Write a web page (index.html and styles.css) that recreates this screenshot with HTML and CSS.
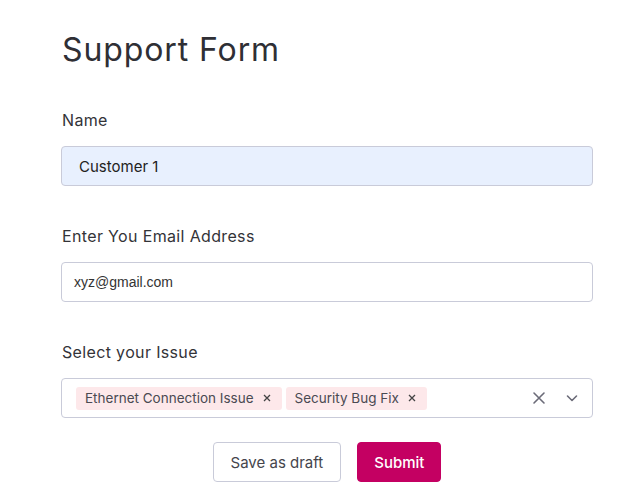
FILE: index.html
```html
<!DOCTYPE html>
<html lang="en">
<head>
<meta charset="utf-8">
<title>Support Form</title>
<link rel="stylesheet" href="styles.css">
</head>
<body>
<form class="form">
  <h1 class="title">Support Form</h1>
  <div class="field">
    <label class="label">Name</label>
    <div class="input input-filled">Customer 1</div>
  </div>
  <div class="field">
    <label class="label">Enter You Email Address</label>
    <div class="input input-email">xyz@gmail.com</div>
  </div>
  <div class="field field-last">
    <label class="label">Select your Issue</label>
    <div class="select">
      <div class="chips">
        <span class="chip">Ethernet Connection Issue<svg class="chip-x" width="8" height="8" viewBox="0 0 8 8"><path d="M1 1 L7 7 M7 1 L1 7" stroke="#444" stroke-width="1.3" fill="none"/></svg></span>
        <span class="chip">Security Bug Fix<svg class="chip-x" width="8" height="8" viewBox="0 0 8 8"><path d="M1 1 L7 7 M7 1 L1 7" stroke="#444" stroke-width="1.3" fill="none"/></svg></span>
      </div>
      <div class="select-icons">
        <svg class="icon" width="14" height="14" viewBox="0 0 14 14"><path d="M2 2 L12 12 M12 2 L2 12" stroke="#6b6b78" stroke-width="1.6" fill="none" stroke-linecap="round"/></svg>
        <svg class="icon chev" width="14" height="14" viewBox="0 0 14 14"><path d="M2.5 5 L7 9.5 L11.5 5" stroke="#6b6b78" stroke-width="1.6" fill="none" stroke-linecap="round" stroke-linejoin="round"/></svg>
      </div>
    </div>
  </div>
  <div class="actions">
    <button type="button" class="btn btn-draft">Save as draft</button>
    <button type="button" class="btn btn-submit">Submit</button>
  </div>
</form>
</body>
</html>
```
FILE: styles.css
```css
html, body {
  margin: 0;
  padding: 0;
  background: #ffffff;
}
.form {
  width: 532px;
  margin-left: 61px;
  padding-top: 30px;
  font-family: "Inter", "Open Sans", sans-serif;
}
.title {
  margin: 0 0 38px 1px;
  font-size: 32px;
  line-height: 40px;
  font-weight: 400;
  color: #2f2f35;
  letter-spacing: 0.9px;
}
.field {
  display: flex;
  flex-direction: column;
  margin-bottom: 38px;
}
.field-last {
  margin-bottom: 24px;
}
.label {
  font-size: 16px;
  line-height: 24px;
  color: #333338;
  letter-spacing: 0.35px;
  margin: 0 0 14px 1px;
}
.input {
  box-sizing: border-box;
  height: 40px;
  border: 1px solid #c9cbd9;
  border-radius: 4px;
  display: flex;
  align-items: center;
}
.input-filled {
  background: #e8f0fe;
  padding-left: 17px;
  font-size: 15px;
  color: #222;
}
.input-email {
  padding-left: 12px;
  font-family: "Liberation Sans", Arial, sans-serif;
  font-size: 14px;
  color: #333;
}
.select {
  box-sizing: border-box;
  height: 40px;
  border: 1px solid #c9cbd9;
  border-radius: 4px;
  display: flex;
  align-items: center;
  justify-content: space-between;
  padding: 0 13px 0 14px;
}
.chips {
  display: flex;
  gap: 4px;
}
.chip {
  display: inline-flex;
  align-items: center;
  height: 23px;
  padding: 0 11px 0 9px;
  background: #fde8ea;
  border-radius: 3px;
  font-size: 13.5px;
  color: #4a4a52;
}
.chip-x {
  margin-left: 9px;
}
.select-icons {
  display: flex;
  align-items: center;
  gap: 19px;
}
.actions {
  display: flex;
  justify-content: center;
  gap: 16px;
}
.btn {
  height: 40px;
  border-radius: 4px;
  font-family: "Inter", sans-serif;
  font-size: 15px;
  padding: 0 17px;
  cursor: pointer;
}
.btn-draft {
  background: #fff;
  border: 1px solid #c9cbd9;
  color: #45454c;
}
.btn-submit {
  background: #c40062;
  border: 1px solid #c40062;
  color: #fff;
  font-weight: 500;
  padding: 0 16px;
}
```
